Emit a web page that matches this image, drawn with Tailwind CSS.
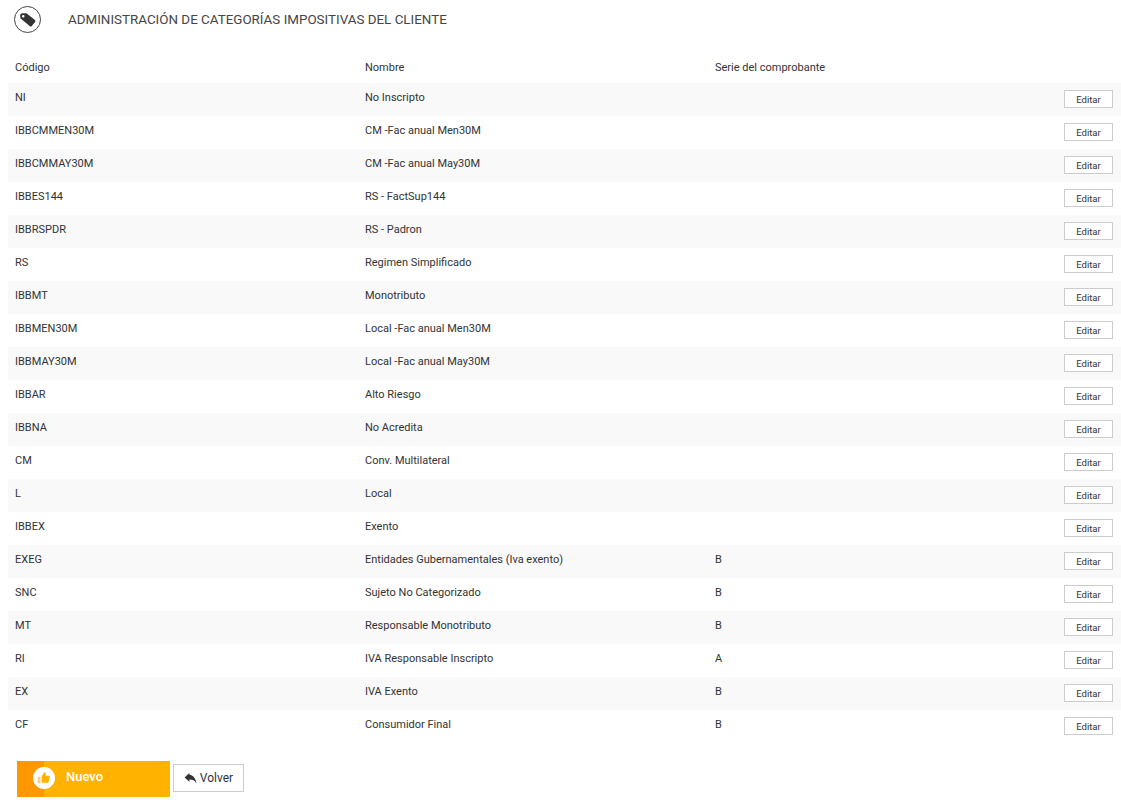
<!DOCTYPE html>
<html lang="es">

<head>
  <meta charset="UTF-8">
  <title>Categorías impositivas</title>
  <script src="https://cdn.jsdelivr.net/npm/@tailwindcss/browser@4"></script>
</head>

<body class="bg-white text-[#333333] font-['Roboto',sans-serif] text-[11px] overflow-hidden">
  <header class="flex items-center h-[38px] pl-[14px]">
    <span class="flex items-center justify-center w-[27px] h-[27px] rounded-full border border-[#444444]">
      <svg viewBox="0 0 16 14" class="w-[17px] h-[15px] fill-[#333333]">
        <path fill-rule="evenodd" d="M1 3.500Q1 1 3.500 1H7L15 7.500Q16 8.500 15 9.500L12 13Q11 14 10 13L1.500 6ZM4 2.800a1.200 1.200 0 1 0 0 2.400a1.200 1.200 0 0 0 0-2.400Z" />
      </svg>
    </span>
    <h1 class="ml-[27px] pt-[2px] text-[13.4px] text-[#444444]">ADMINISTRACIÓN DE CATEGORÍAS IMPOSITIVAS DEL CLIENTE</h1>
  </header>

  <main class="pl-[8px] mt-[12px]">
    <table class="w-full table-fixed border-collapse">
      <thead>
        <tr class="h-[33px] text-left">
          <th class="w-[350px] pl-[7px] pt-[4px] font-normal">Código</th>
          <th class="w-[350px] pl-[7px] pt-[4px] font-normal">Nombre</th>
          <th class="w-[350px] pl-[7px] pt-[4px] font-normal">Serie del comprobante</th>
          <th class="font-normal"></th>
        </tr>
      </thead>
      <tbody id="rows"></tbody>
    </table>

    <div class="flex items-start mt-[18px] ml-[9px]">
      <button class="flex w-[153px] h-[36px] bg-[#ffb300] text-white text-[13px] font-medium">
        <span class="w-[27px] h-full bg-[#ff9800]"></span>
        <span class="flex items-center justify-center w-[22px] h-[22px] -ml-[11px] mt-[6px] rounded-full bg-white">
          <svg viewBox="0 0 24 24" class="w-[14px] h-[14px]">
            <path class="fill-[#ffcc80]" d="M1 10h5v11H1z" />
            <path class="fill-[#ffb300]" d="M8 10l4-8c1.800 0 3 1.200 3 3v3h5.500c1 0 1.700 1 1.400 2l-2 9c-.2.600-.8 1-1.400 1H8z" />
          </svg>
        </span>
        <span class="ml-[11px] mt-[6px]">Nuevo</span>
      </button>
      <button class="flex items-center justify-center w-[71px] h-[28px] mt-[3px] ml-[3px] border border-[#cccccc] text-[12px]">
        <svg viewBox="0 0 24 24" class="w-[13px] h-[13px] mr-[3px] fill-[#333333]">
          <path d="M10 5v-3L1 10l9 8v-4c6 0 10 1.500 13 7c-1-8-5-15-13-16z" />
        </svg>
        Volver
      </button>
    </div>
  </main>

  <script>
    const data = [
      ['NI', 'No Inscripto', ''], ['IBBCMMEN30M', 'CM -Fac anual Men30M', ''],
      ['IBBCMMAY30M', 'CM -Fac anual May30M', ''], ['IBBES144', 'RS - FactSup144', ''],
      ['IBBRSPDR', 'RS - Padron', ''], ['RS', 'Regimen Simplificado', ''],
      ['IBBMT', 'Monotributo', ''], ['IBBMEN30M', 'Local -Fac anual Men30M', ''],
      ['IBBMAY30M', 'Local -Fac anual May30M', ''], ['IBBAR', 'Alto Riesgo', ''],
      ['IBBNA', 'No Acredita', ''], ['CM', 'Conv. Multilateral', ''],
      ['L', 'Local', ''], ['IBBEX', 'Exento', ''],
      ['EXEG', 'Entidades Gubernamentales (Iva exento)', 'B'], ['SNC', 'Sujeto No Categorizado', 'B'],
      ['MT', 'Responsable Monotributo', 'B'], ['RI', 'IVA Responsable Inscripto', 'A'],
      ['EX', 'IVA Exento', 'B'], ['CF', 'Consumidor Final', 'B'],
    ];
    document.getElementById('rows').innerHTML = data.map(([code, name, serie]) => `
      <tr class="h-[33px] odd:bg-[#f9f9f9]">
        <td class="pl-[7px] pb-[2px]">${code}</td>
        <td class="pl-[7px] pb-[2px]">${name}</td>
        <td class="pl-[7px] pb-[2px]">${serie}</td>
        <td class="pr-[8px] pb-[1px] text-right">
          <button class="w-[49px] h-[18px] pt-[2px] border border-[#cccccc] bg-white text-[9.5px] leading-none">Editar</button>
        </td>
      </tr>`).join('');
  </script>
</body>

</html>
